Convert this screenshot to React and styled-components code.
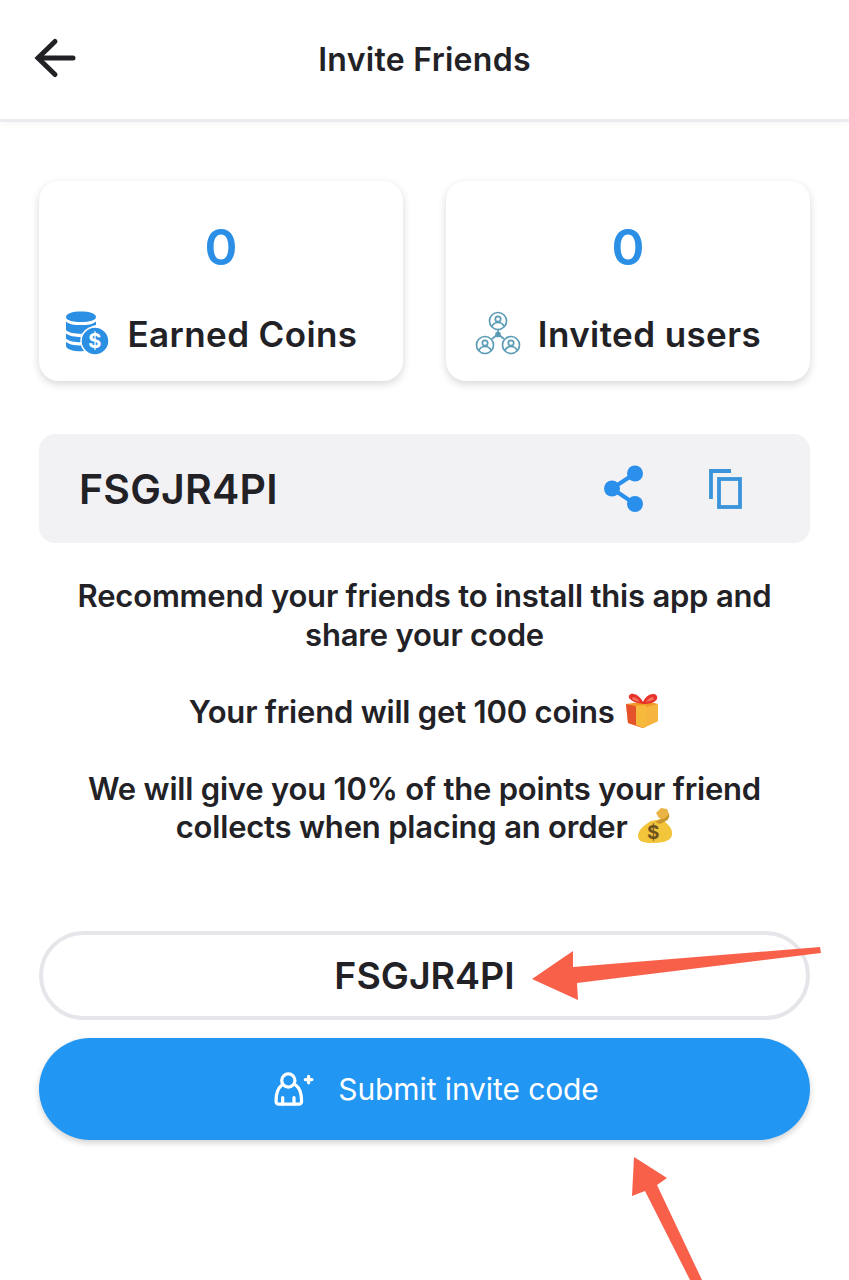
import React from 'react'
import styled, { createGlobalStyle } from 'styled-components'

const GlobalStyle = createGlobalStyle`
  html, body {
    margin: 0;
    padding: 0;
    background: #fff;
  }
  * {
    box-sizing: border-box;
  }
`

const BackIcon = () => (
  <svg width="44" height="44" viewBox="0 0 44 44" fill="none" stroke="#222226" strokeWidth="5" strokeLinecap="round">
    <path d="M39 21H5" />
    <path d="M21 4.500L4 21l17 16.500" />
  </svg>
)

const CoinsIcon = () => (
  <svg width="46" height="46" viewBox="0 0 46 46">
    <path
      fill="#2b8fe3"
      d="M1 6c0-3.500 6.500-5.500 15-5.500S31 2.500 31 6s-6.500 5-15 5S1 9.500 1 6zM1 10.500c3 3 8.500 3.500 15 3.500s12-.5 15-3.500V14c-5 1-9 4-11 8.500-1.300.2-2.700.2-4 .2-6.500 0-12-1-15-3.500zM1 22.500c3 2.500 8.500 3.500 15 3.500h3c-.2 1.800 0 3.500.3 5.200-1 .1-2.200.1-3.300.1-6.500 0-12-1-15-3.500zM1 31c3 2.500 8.500 3.500 15 3.500h4.500c.7 1.800 1.700 3.500 3 5-2.200.5-4.800.7-7.500.7-8.500 0-15-2-15-5.500z"
    />
    <circle cx="30" cy="30" r="14" fill="#2b8fe3" stroke="#fff" strokeWidth="1.500" />
    <text x="30" y="37" textAnchor="middle" fontFamily="Inter, sans-serif" fontSize="20" fontWeight="700" fill="#fff">$</text>
  </svg>
)

const UsersIcon = () => (
  <svg width="46" height="46" viewBox="0 0 46 46" fill="none" stroke="#5a9bb5" strokeWidth="1.700">
    <circle cx="23" cy="10" r="8.500" />
    <circle cx="23" cy="8" r="2.700" />
    <path d="M17 15.500c1-3 3-4 6-4s5 1 6 4" />
    <circle cx="10" cy="34" r="8.500" />
    <circle cx="10" cy="32" r="2.700" />
    <path d="M4 39.500c1-3 3-4 6-4s5 1 6 4" />
    <circle cx="36" cy="34" r="8.500" />
    <circle cx="36" cy="32" r="2.700" />
    <path d="M30 39.500c1-3 3-4 6-4s5 1 6 4" />
    <path d="M23 18.500v4M23 23l-6 5M23 23l6 5" />
    <circle cx="23" cy="23.500" r="2" fill="#5a9bb5" />
  </svg>
)

const ShareIcon = () => (
  <svg width="40" height="48" viewBox="0 0 40 48" fill="#2b8fec">
    <circle cx="31" cy="8.500" r="8" />
    <circle cx="8" cy="23.500" r="8" />
    <circle cx="31" cy="39" r="8" />
    <path d="M8 23.500L31 8.500M8 23.500L31 39" stroke="#2b8fec" strokeWidth="4" />
  </svg>
)

const CopyIcon = () => (
  <svg width="34" height="42" viewBox="0 0 34 42" fill="none" stroke="#3a94dc" strokeWidth="3.800">
    <path d="M3 31V3h20" />
    <rect x="11" y="11" width="21" height="28" />
  </svg>
)

const GiftIcon = () => (
  <svg width="36" height="36" viewBox="0 0 36 36">
    <path fill="#f19a2b" d="M2 11l21-3 11 3v17l-15 7-15-5z" />
    <path fill="#f5b53f" d="M19 15l15-4v17l-15 7z" />
    <path fill="#e5522b" d="M2 11l17 4v20l-15-5z" />
    <path fill="#f6b93c" d="M12 13l10-1v22l-3 1-7-3z" />
    <path fill="#e8332c" d="M19 11C14 10 8 9 5 5c-1-3 2-5 5-4 4 1 7 4 9 8 2-4 5-8 10-8 3 0 5 2 4 5-2 4-8 5-14 5z" />
    <path fill="#f2705c" d="M9 4c3 0 6 3 7 5-3-1-6-1-8-3zM29 4c-3 0-6 3-7 5 3-1 6-1 8-3z" />
  </svg>
)

const MoneyBagIcon = () => (
  <svg width="36" height="38" viewBox="0 0 36 38">
    <path fill="#f3c53b" d="M14 15C7 19 1 24 1 30c0 5 5 7 13 7 9 0 20-1 21-8 1-7-5-12-11-16z" />
    <path fill="#c9962d" d="M18 16l6-3-3-6 5-1 6 2c1 3-1 6-3 7l-6 3z" />
    <path fill="#e9b345" d="M19 7l5-5 6 1 2 5-5 5-5-1z" />
    <text x="16" y="33" textAnchor="middle" fontFamily="Inter, sans-serif" fontSize="19" fontWeight="700" fill="#6e5220">$</text>
  </svg>
)

const AddUserIcon = () => (
  <svg width="40" height="34" viewBox="0 0 42 36" fill="none" stroke="#fff" strokeWidth="3.400" strokeLinecap="round" strokeLinejoin="round">
    <circle cx="15" cy="9" r="7" />
    <path d="M8 14C4 17 2 23 2 31c0 2 1 3 3 3h21c2 0 3-1 3-3 0-8-2-14-6-17" />
    <path d="M9 34v-7M21 34v-7" />
    <path d="M33 8h7M36.500 4.500v7" />
  </svg>
)

const App = () => {
  return (
    <Page>
      <GlobalStyle />
      <Header>
        <BackButton>
          <BackIcon />
        </BackButton>
        <Title>Invite Friends</Title>
      </Header>

      <Content>
        <Stats>
          <StatCard>
            <StatValue>0</StatValue>
            <StatLabel>
              <CoinsIcon />
              Earned Coins
            </StatLabel>
          </StatCard>
          <StatCard>
            <StatValue>0</StatValue>
            <StatLabel>
              <UsersIcon />
              Invited users
            </StatLabel>
          </StatCard>
        </Stats>

        <CodeBox>
          <Code>FSGJR4PI</Code>
          <CodeActions>
            <ShareIcon />
            <CopyIcon />
          </CodeActions>
        </CodeBox>

        <Message>
          <Line>Recommend your friends to install this app and</Line>
          <Line>share your code</Line>
          <Line $gap>
            Your friend will get 100 coins <GiftIcon />
          </Line>
          <Line $gap>We will give you 10% of the points your friend</Line>
          <Line>
            collects when placing an order <MoneyBagIcon />
          </Line>
        </Message>

        <CodeInput>FSGJR4PI</CodeInput>
        <SubmitButton>
          <AddUserIcon />
          Submit invite code
        </SubmitButton>
      </Content>

      <InputArrow viewBox="0 0 292 56" width="292" height="56">
        <path fill="#f9604a" d="M2 34L43 6l0 16L290 2l1 6L47 38l1 17z" />
      </InputArrow>
      <ButtonArrow viewBox="0 0 74 126" width="74" height="126">
        <path fill="#f9604a" d="M4 3L37 24l-10 7 45 95H60L15 37 2 42z" />
      </ButtonArrow>
    </Page>
  )
}

const Page = styled.div`
  position: relative;
  width: 849px;
  height: 1280px;
  overflow: hidden;
  background: #fff;
  font-family: Inter, 'Noto Sans', sans-serif;
  color: #222226;
`

const Header = styled.header`
  position: relative;
  height: 122px;
  display: flex;
  align-items: center;
  justify-content: center;
  border-bottom: 3px solid #ececf0;
  box-shadow: 0 3px 6px rgba(0, 0, 0, 0.03);
`

const BackButton = styled.div`
  position: absolute;
  left: 34px;
  top: 37px;
  display: flex;
`

const Title = styled.h1`
  margin: 0;
  font-size: 32px;
  line-height: 36px;
  font-weight: 600;
  letter-spacing: 0.3px;
`

const Content = styled.main`
  padding: 59px 39px 0;
`

const Stats = styled.section`
  display: grid;
  grid-template-columns: 364px 364px;
  column-gap: 43px;
`

const StatCard = styled.div`
  height: 200px;
  border-radius: 20px;
  background: #fff;
  box-shadow: 0 3px 9px rgba(0, 0, 0, 0.16);
  display: flex;
  flex-direction: column;
  align-items: center;
  padding-top: 39px;
`

const StatValue = styled.div`
  font-size: 50px;
  line-height: 54px;
  font-weight: 600;
  color: #2b8fe6;
`

const StatLabel = styled.div`
  margin-top: 37px;
  margin-right: 20px;
  height: 46px;
  display: flex;
  align-items: center;
  gap: 17px;
  font-size: 35px;
  font-weight: 600;
  letter-spacing: 0.4px;
  white-space: nowrap;
`

const CodeBox = styled.section`
  margin-top: 53px;
  height: 109px;
  width: 771px;
  border-radius: 16px;
  background: #f2f2f4;
  display: flex;
  align-items: center;
  justify-content: space-between;
  padding: 0 68px 0 40px;
`

const Code = styled.div`
  font-size: 41px;
  font-weight: 600;
  letter-spacing: 0.2px;
`

const CodeActions = styled.div`
  display: flex;
  align-items: center;
  gap: 64px;
`

const Message = styled.section`
  margin-top: 34px;
  text-align: center;
  font-size: 31px;
  font-weight: 600;
  letter-spacing: -0.2px;
`

const Line = styled.p`
  margin: ${props => (props.$gap ? '38.5px' : '0')} 0 0;
  height: 38.5px;
  line-height: 38.5px;
  white-space: nowrap;

  svg {
    margin: -8px 0 -6px 2px;
  }
`

const CodeInput = styled.div`
  margin-top: 84.5px;
  width: 771px;
  height: 89px;
  border: 4px solid #e5e5ea;
  border-radius: 45px;
  display: flex;
  align-items: center;
  justify-content: center;
  font-size: 37.5px;
  font-weight: 600;
`

const SubmitButton = styled.button`
  margin-top: 18px;
  width: 771px;
  height: 102px;
  border: none;
  border-radius: 51px;
  padding: 0 0 0 24px;
  background: #2196f3;
  box-shadow: 0 3px 6px rgba(0, 0, 0, 0.18);
  color: #fff;
  display: flex;
  align-items: center;
  justify-content: center;
  gap: 24px;
  font-family: inherit;
  font-size: 30px;
  font-weight: 400;
  letter-spacing: -0.1px;
`

const InputArrow = styled.svg`
  position: absolute;
  left: 530px;
  top: 945px;
`

const ButtonArrow = styled.svg`
  position: absolute;
  left: 630px;
  top: 1154px;
`

export default App
